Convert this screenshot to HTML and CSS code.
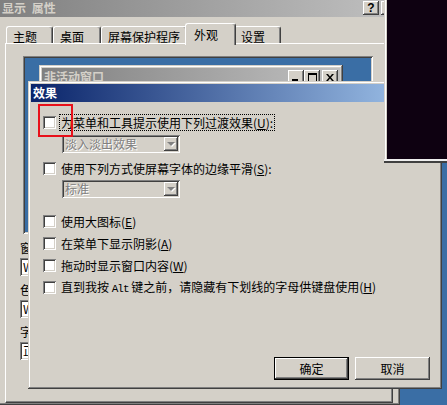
FILE: index.html
```html
<!DOCTYPE html>
<html lang="zh-CN">
<head>
    <meta charset="UTF-8">
    <meta name="viewport" content="width=device-width, initial-scale=1.0">
    <title>显示 属性 - 效果</title>
    <link rel="stylesheet" href="styles.css">
</head>
<body>
    <!-- back window: display properties -->
    <div class="window props">
        <div class="titlebar inactive">
            <span class="title">显示 属性</span>
            <span class="caption-btn help">?</span>
            <span class="caption-btn close">×</span>
        </div>
        <div class="tabs">
            <div class="tab t1">主题</div>
            <div class="tab t2">桌面</div>
            <div class="tab t3">屏幕保护程序</div>
            <div class="tab t4 selected">外观</div>
            <div class="tab t5">设置</div>
        </div>
        <div class="panel">
            <div class="preview">
                <div class="mini-window">
                    <div class="mini-title">
                        <span class="mini-text">非活动窗口</span>
                        <span class="mini-btn min">
                            <svg width="6" height="2" viewBox="0 0 6 2"><rect x="0" y="0" width="6" height="2" fill="#000"/></svg>
                        </span>
                        <span class="mini-btn max">
                            <svg width="9" height="9" viewBox="0 0 9 9"><path d="M0.5 1.5h8v7h-8z" fill="none" stroke="#000"/><rect x="0" y="0" width="9" height="2" fill="#000"/></svg>
                        </span>
                        <span class="mini-btn close">
                            <svg width="8" height="7" viewBox="0 0 8 7"><path d="M0 0l2 0 2 2.5 2-2.5 2 0-3 3.5 3 3.5h-2l-2-2.5-2 2.5h-2l3-3.5z" fill="#000"/></svg>
                        </span>
                    </div>
                </div>
            </div>
            <!-- only the left edge of these shows past the effects dialog -->
            <div class="field">
                <div class="field-label">窗口和按钮(<u>W</u>):</div>
                <div class="field-box">Windows 经典样式</div>
            </div>
            <div class="field">
                <div class="field-label">色彩方案(<u>C</u>):</div>
                <div class="field-box">Windows 标准</div>
            </div>
            <div class="field">
                <div class="field-label">字体大小(<u>F</u>):</div>
                <div class="field-box">正常</div>
            </div>
        </div>
    </div>

    <!-- effects dialog -->
    <div class="window effects">
        <div class="titlebar active">
            <span class="title">效果</span>
        </div>
        <div class="fx-body">
            <div class="check-row">
                <span class="checkbox"></span>
                <span class="check-label focus">为菜单和工具提示使用下列过渡效果(<u>U</u>):</span>
            </div>
            <div class="combo combo-1">
                <span class="combo-text">淡入淡出效果</span>
                <span class="combo-arrow"><span class="arrow"></span></span>
            </div>
            <div class="check-row row-2">
                <span class="checkbox"></span>
                <span class="check-label">使用下列方式使屏幕字体的边缘平滑(<u>S</u>):</span>
            </div>
            <div class="combo combo-2">
                <span class="combo-text">标准</span>
                <span class="combo-arrow"><span class="arrow"></span></span>
            </div>
            <div class="check-row row-3">
                <span class="checkbox"></span>
                <span class="check-label">使用大图标(<u>E</u>)</span>
            </div>
            <div class="check-row row-n">
                <span class="checkbox"></span>
                <span class="check-label">在菜单下显示阴影(<u>A</u>)</span>
            </div>
            <div class="check-row row-n">
                <span class="checkbox"></span>
                <span class="check-label">拖动时显示窗口内容(<u>W</u>)</span>
            </div>
            <div class="check-row row-n">
                <span class="checkbox"></span>
                <span class="check-label">直到我按 <span class="mono">Alt</span> 键之前，请隐藏有下划线的字母供键盘使用(<u>H</u>)</span>
            </div>
            <div class="button-row">
                <button class="btn default">确定</button>
                <button class="btn">取消</button>
            </div>
        </div>
    </div>

    <!-- dark window over the top right -->
    <div class="dark-window"></div>

    <!-- red annotation box -->
    <div class="mark"></div>
</body>
</html>
```

FILE: styles.css
```css
* {
    box-sizing: border-box;
}
html, body {
    margin: 0;
}
body {
    width: 447px;
    height: 405px;
    overflow: hidden;
    position: relative;
    background-color: #3a6ea5;
    font-family: "Noto Sans CJK SC", "DejaVu Sans", sans-serif;
    font-size: 12px;
    line-height: 14px;
    color: #000000;
}
u {
    text-decoration: underline;
}
.window {
    position: absolute;
    display: flex;
    flex-direction: column;
    padding: 3px;
    background-color: #d4d0c8;
    box-shadow: inset -1px -1px #404040, inset 1px 1px #d4d0c8, inset -2px -2px #808080, inset 2px 2px #ffffff;
}
.props {
    left: -3px;
    top: -4px;
    width: 403px;
    height: 409px;
}
.effects {
    left: 28px;
    top: 81px;
    width: 414px;
    height: 308px;
}
.titlebar {
    display: flex;
    align-items: center;
    height: 18px;
    flex: none;
    padding-left: 2px;
    font-weight: bold;
    color: #ffffff;
}
.titlebar.inactive {
    background: linear-gradient(to right, #808080, #c0c0c0);
    color: #d4d0c8;
}
.titlebar.active {
    background: linear-gradient(to right, #0a246a, #a6caf0);
}
.titlebar .title {
    word-spacing: 3px;
}
.caption-btn {
    width: 16px;
    height: 14px;
    background-color: #d4d0c8;
    box-shadow: inset -1px -1px #404040, inset 1px 1px #ffffff, inset -2px -2px #808080;
    color: #000000;
    font-family: "Liberation Sans", Arial, sans-serif;
    font-size: 12px;
    line-height: 14px;
    text-align: center;
}
.caption-btn.help {
    margin-left: auto;
}
.caption-btn.close {
    margin-left: 2px;
}

/* tabs */
.tabs {
    display: flex;
    align-items: flex-end;
    height: 26px;
    flex: none;
    padding-left: 6px;
    position: relative;
    z-index: 1;
}
.tab {
    height: 17px;
    padding: 3px 0 0 6px;
    border-top: 1px solid #ffffff;
    border-left: 1px solid #ffffff;
    border-right: 1px solid #404040;
    border-radius: 3px 3px 0 0;
    box-shadow: inset -1px 0 #808080;
    background-color: #d4d0c8;
    white-space: nowrap;
}
.t1 { width: 47px; }
.t2 { width: 48px; }
.t3 { width: 86px; }
.t4 { width: 47px; }
.t5 { width: 47px; }
.tab.selected {
    width: 51px;
    height: 22px;
    margin: 0 -2px -2px -2px;
    padding: 4px 0 0 8px;
    position: relative;
    z-index: 2;
}
.panel {
    flex: none;
    height: 360px;
    margin: 0 4px 0 5px;
    padding: 12px 0 0 14px;
    border-top: 1px solid #ffffff;
    border-left: 1px solid #ffffff;
    border-right: 1px solid #404040;
    border-bottom: 1px solid #404040;
    box-shadow: inset -1px -1px #808080;
}
.preview {
    width: 350px;
    height: 178px;
    margin-left: 3px;
    padding: 9px 0 0 16px;
    background-color: #3a6ea5;
    box-shadow: inset 1px 1px #808080, inset -1px -1px #ffffff, inset 2px 2px #404040, inset -2px -2px #d4d0c8;
}
.mini-window {
    width: 304px;
    height: 120px;
    padding: 3px;
    background-color: #d4d0c8;
    box-shadow: inset -1px -1px #404040, inset 1px 1px #d4d0c8, inset -2px -2px #808080, inset 2px 2px #ffffff;
}
.mini-title {
    display: flex;
    align-items: center;
    height: 18px;
    padding: 0 2px 0 2px;
    background: linear-gradient(to right, #808080, #c0c0c0);
    color: #d4d0c8;
    font-weight: bold;
}
.mini-btn {
    display: flex;
    align-items: center;
    justify-content: center;
    width: 16px;
    height: 14px;
    background-color: #d4d0c8;
    box-shadow: inset -1px -1px #404040, inset 1px 1px #ffffff, inset -2px -2px #808080;
}
.mini-btn.min {
    margin-left: auto;
    align-items: flex-end;
    padding: 0 3px 3px 0;
}
.mini-btn.close {
    margin-left: 2px;
}
.field {
    width: 9px;
    overflow: hidden;
}
.field-label {
    margin-top: 7px;
    white-space: nowrap;
}
.field-box {
    width: 220px;
    height: 18px;
    margin-top: 3px;
    padding: 2px 0 0 3px;
    background-color: #ffffff;
    box-shadow: inset 1px 1px #808080, inset -1px -1px #ffffff, inset 2px 2px #404040, inset -2px -2px #d4d0c8;
    white-space: nowrap;
}

/* effects dialog */
.fx-body {
    flex: 1;
    display: flex;
    flex-direction: column;
    padding: 12px 9px 6px 12px;
}
.check-row {
    display: flex;
    align-items: center;
    gap: 3px;
    height: 17px;
}
.row-2 {
    margin-top: 7px;
}
.row-3 {
    margin-top: 15px;
}
.row-n {
    margin-top: 5px;
}
.checkbox {
    width: 13px;
    height: 13px;
    flex: none;
    background-color: #ffffff;
    box-shadow: inset 1px 1px #808080, inset -1px -1px #ffffff, inset 2px 2px #404040, inset -2px -2px #d4d0c8;
}
.check-label {
    padding: 0 1px;
    border: 1px dotted transparent;
    line-height: 15px;
    white-space: nowrap;
}
.check-label.focus {
    border-color: #000000;
}
.mono {
    font-family: "Liberation Mono", monospace;
    font-size: 11px;
    letter-spacing: -1px;
}
.combo {
    display: flex;
    align-items: stretch;
    width: 118px;
    height: 18px;
    margin-left: 19px;
    padding: 2px;
    background-color: #d4d0c8;
    box-shadow: inset 1px 1px #808080, inset -1px -1px #ffffff, inset 2px 2px #404040, inset -2px -2px #d4d0c8;
}
.combo-1 {
    margin-top: 4px;
}
.combo-2 {
    margin-top: 3px;
}
.combo-text {
    padding-left: 1px;
    color: #808080;
    text-shadow: 1px 1px #ffffff;
    white-space: nowrap;
}
.combo-arrow {
    display: flex;
    align-items: center;
    justify-content: center;
    width: 14px;
    margin-left: auto;
    background-color: #d4d0c8;
    box-shadow: inset -1px -1px #404040, inset 1px 1px #ffffff, inset -2px -2px #808080;
}
.arrow {
    width: 0;
    height: 0;
    border-left: 4px solid transparent;
    border-right: 4px solid transparent;
    border-top: 4px solid #808080;
    filter: drop-shadow(1px 1px 0 #ffffff);
}
.button-row {
    display: flex;
    justify-content: flex-end;
    gap: 6px;
    margin-top: auto;
}
.btn {
    width: 75px;
    height: 23px;
    padding: 0;
    border: none;
    background-color: #d4d0c8;
    font-family: inherit;
    font-size: 12px;
    color: #000000;
    box-shadow: inset -1px -1px #404040, inset 1px 1px #ffffff, inset -2px -2px #808080;
}
.btn.default {
    box-shadow: inset 0 0 0 1px #000000, inset -2px -2px #404040, inset 2px 2px #ffffff, inset -3px -3px #808080;
}

.dark-window {
    position: absolute;
    left: 384px;
    top: 0;
    width: 63px;
    height: 163px;
    background-color: #0e0111;
    box-shadow: inset 0 -2px #404040, inset 0 -4px #eeeeee, inset 1px 0 #d4d0c8, inset 2px 0 #ffffff, inset 3px 0 #d4d0c8;
}
.mark {
    position: absolute;
    left: 38px;
    top: 104px;
    width: 35px;
    height: 33px;
    border: 2px solid #e8101a;
}
```
